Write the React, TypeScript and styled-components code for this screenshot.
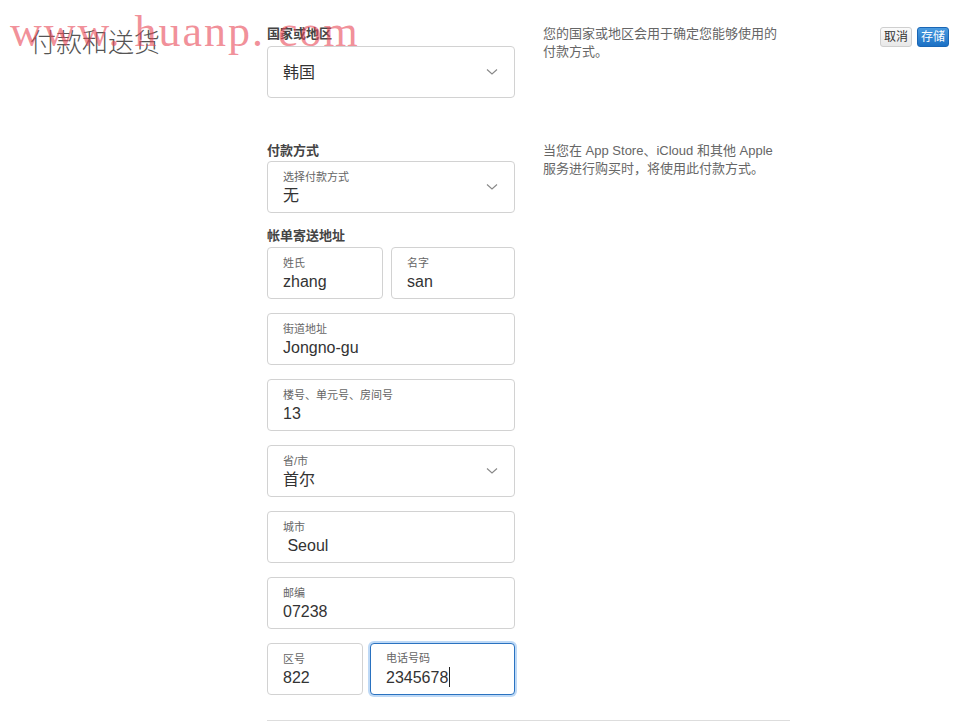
import * as React from "react";
import styled, { createGlobalStyle } from "styled-components";

const GlobalStyle = createGlobalStyle`
  html, body {
    margin: 0;
    padding: 0;
    background: #fff;
  }
  body {
    font-family: "Liberation Sans", "Noto Sans CJK SC", sans-serif;
    color: #333;
  }
`;

type Field = {
  label: string;
  value: string;
  select?: boolean;
  focused?: boolean;
};

const Chevron: React.FC = () => (
  <ChevronSvg viewBox="0 0 12 8" width="12" height="8">
    <path d="M1 1.5 L6 6 L11 1.5" fill="none" stroke="#888" strokeWidth="1.1" />
  </ChevronSvg>
);

const FieldBox: React.FC<Field> = ({ label, value, select, focused }) => (
  <Box $focused={focused}>
    <BoxText>
      {label && <BoxLabel>{label}</BoxLabel>}
      <BoxValue $big={!label}>
        {value}
        {focused && <Caret />}
      </BoxValue>
    </BoxText>
    {select && <Chevron />}
  </Box>
);

export default function App() {
  return (
    <>
      <GlobalStyle />
      <Page>
        <Title>付款和送货</Title>
        <Content>
          <Section>
            <FormCol>
              <GroupLabel>国家或地区</GroupLabel>
              <FieldBox label="" value="韩国" select />
            </FormCol>
            <Desc>
              您的国家或地区会用于确定您能够使用的
              <br />
              付款方式。
            </Desc>
          </Section>

          <Section $top={44}>
            <FormCol>
              <GroupLabel $bottom={2}>付款方式</GroupLabel>
              <FieldBox label="选择付款方式" value="无" select />
              <GroupLabel $top={14} $bottom={3}>帐单寄送地址</GroupLabel>
              <Fields>
                <Row $cols="116px 124px" $gap={8}>
                  <FieldBox label="姓氏" value="zhang" />
                  <FieldBox label="名字" value="san" />
                </Row>
                <FieldBox label="街道地址" value="Jongno-gu" />
                <FieldBox label="楼号、单元号、房间号" value="13" />
                <FieldBox label="省/市" value="首尔" select />
                <FieldBox label="城市" value={"\u00a0Seoul"} />
                <FieldBox label="邮编" value="07238" />
                <Row $cols="96px 145px" $gap={7}>
                  <FieldBox label="区号" value="822" />
                  <FieldBox label="电话号码" value="2345678" focused />
                </Row>
              </Fields>
            </FormCol>
            <Desc>
              当您在 App Store、iCloud 和其他 Apple
              <br />
              服务进行购买时，将使用此付款方式。
            </Desc>
          </Section>
          <Divider />
        </Content>
        <Actions>
          <Button>取消</Button>
          <Button $primary>存储</Button>
        </Actions>
        <Watermark>www. huanp. com</Watermark>
      </Page>
    </>
  );
}

const Page = styled.div`
  position: relative;
  display: flex;
  align-items: flex-start;
  padding: 0 26px 0 30px;
  min-height: 721px;
  box-sizing: border-box;
`;

const Title = styled.h1`
  width: 237px;
  flex-shrink: 0;
  margin: 28px 0 0;
  font-size: 26px;
  line-height: 30px;
  font-weight: 300;
  color: #555;
`;

const Content = styled.div`
  width: 523px;
  padding-top: 25px;
`;

const Section = styled.div<{ $top?: number }>`
  display: grid;
  grid-template-columns: 248px 1fr;
  column-gap: 28px;
  margin-top: ${p => p.$top ?? 0}px;
`;

const FormCol = styled.div`
  display: flex;
  flex-direction: column;
`;

const GroupLabel = styled.div<{ $top?: number; $bottom?: number }>`
  font-size: 13px;
  line-height: 17px;
  font-weight: 700;
  color: #444;
  margin: ${p => p.$top ?? 0}px 0 ${p => p.$bottom ?? 4}px;
`;

const Fields = styled.div`
  display: flex;
  flex-direction: column;
  gap: 14px;
`;

const Row = styled.div<{ $cols: string; $gap: number }>`
  display: grid;
  grid-template-columns: ${p => p.$cols};
  column-gap: ${p => p.$gap}px;
`;

const Box = styled.div<{ $focused?: boolean }>`
  height: 52px;
  box-sizing: border-box;
  display: flex;
  align-items: center;
  padding: 0 16px 0 15px;
  border: 1px solid ${p => (p.$focused ? "#2a72c0" : "#d2d2d2")};
  border-radius: 4px;
  box-shadow: ${p => (p.$focused ? "0 0 0 2px rgba(110, 170, 235, 0.45)" : "none")};
  background: #fff;
`;

const BoxText = styled.div`
  flex: 1;
  display: flex;
  flex-direction: column;
`;

const BoxLabel = styled.div`
  font-size: 11px;
  line-height: 14px;
  color: #666;
`;

const BoxValue = styled.div<{ $big?: boolean }>`
  font-size: 16px;
  line-height: 19px;
  color: #333;
  margin-top: ${p => (p.$big ? 0 : 2)}px;
`;

const Caret = styled.span`
  display: inline-block;
  width: 1px;
  height: 20px;
  background: #222;
  vertical-align: -4px;
  margin-left: 1px;
`;

const ChevronSvg = styled.svg`
  flex-shrink: 0;
`;

const Desc = styled.div`
  width: 250px;
  font-size: 13px;
  line-height: 18px;
  color: #666;
`;

const Divider = styled.div`
  height: 1px;
  background: #ddd;
  margin-top: 25px;
`;

const Actions = styled.div`
  margin-left: auto;
  margin-top: 27px;
  display: flex;
  gap: 5px;
`;

const Button = styled.button<{ $primary?: boolean }>`
  height: 20px;
  padding: 0 3px;
  font-family: "Liberation Sans", "Noto Sans CJK SC", sans-serif;
  font-size: 12px;
  line-height: 18px;
  border-radius: 3px;
  cursor: pointer;
  border: 1px solid ${p => (p.$primary ? "#1a66b5" : "#cfcfcf")};
  color: ${p => (p.$primary ? "#fff" : "#333")};
  background: ${p =>
    p.$primary
      ? "linear-gradient(#4a9be0, #1b70c4)"
      : "linear-gradient(#fbfbfb, #e8e8e8)"};
`;

const Watermark = styled.div`
  position: absolute;
  left: 10px;
  top: 2px;
  font-family: "Liberation Serif", serif;
  font-size: 44px;
  line-height: 60px;
  letter-spacing: 2px;
  color: rgba(232, 70, 85, 0.6);
  pointer-events: none;
  white-space: pre;
`;
